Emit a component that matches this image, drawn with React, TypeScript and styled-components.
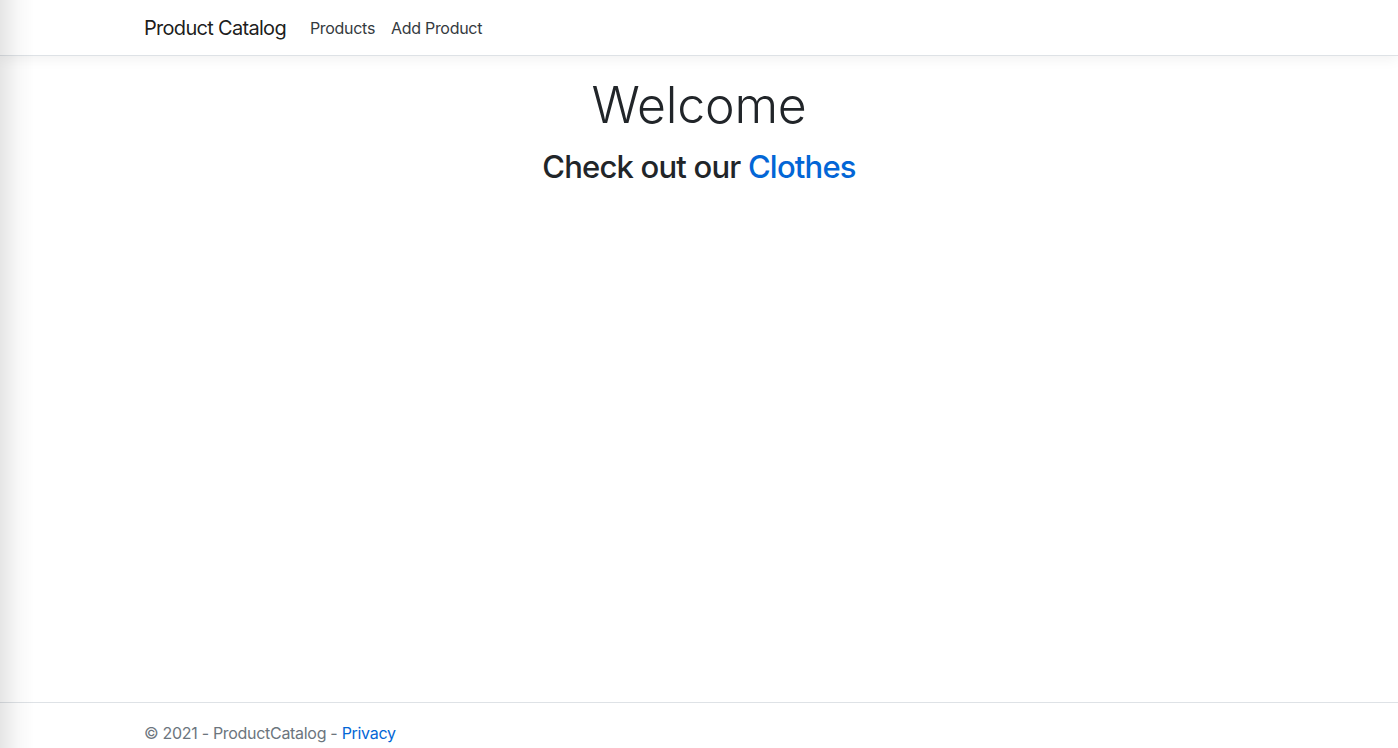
import React from "react";
import styled, { createGlobalStyle } from "styled-components";

const GlobalStyle = createGlobalStyle`
  html, body { margin: 0; padding: 0; height: 100%; overflow: hidden; }
  body {
    font-family: Inter, "Noto Sans", "Liberation Sans", sans-serif;
    font-size: 16px;
    line-height: 1.5;
    color: #212529;
    background: #fff;
  }
  * { box-sizing: border-box; }
`;

const Page = styled.div`
  height: 100vh;
  display: flex;
  flex-direction: column;
  overflow: hidden;
`;

const EdgeShade = styled.div`
  position: fixed;
  top: 0;
  left: 0;
  bottom: 0;
  width: 34px;
  pointer-events: none;
  background: linear-gradient(to right, rgba(0, 0, 0, 0.1), rgba(0, 0, 0, 0.03) 50%, rgba(0, 0, 0, 0));
`;

const Container = styled.div`
  width: 100%;
  max-width: 1140px;
  margin: 0 auto;
  padding: 0 15px;
`;

const Header = styled.header`
  flex-shrink: 0;
  margin-bottom: 19px;
`;

const NavBar = styled.nav`
  padding: 8px 16px 7px;
  border-bottom: 1px solid #dee2e6;
  box-shadow: 0 4px 12px rgba(0, 0, 0, 0.05);
  background: #fff;
`;

const NavInner = styled(Container)`
  display: flex;
  align-items: center;
`;

const Brand = styled.a`
  font-size: 20px;
  line-height: 30px;
  padding: 5px 0;
  margin-right: 16px;
  letter-spacing: -0.7px;
  color: rgba(0, 0, 0, 0.9);
  text-decoration: none;
  white-space: nowrap;
`;

const NavList = styled.ul`
  display: flex;
  list-style: none;
  margin: 0;
  padding: 0;
`;

const NavLink = styled.a`
  display: block;
  padding: 8px 8px;
  color: #343a40;
  text-decoration: none;
  font-size: 16px;
  line-height: 24px;
  letter-spacing: -0.3px;
`;

const Main = styled.main`
  flex: 1;
  text-align: center;
`;

const Title = styled.h1`
  margin: 0 0 13px;
  font-size: 50px;
  font-weight: 300;
  line-height: 1.2;
  letter-spacing: -0.2px;
`;

const Subtitle = styled.h2`
  margin: 0 0 8px;
  font-size: 31px;
  font-weight: 500;
  line-height: 1.2;
  letter-spacing: -0.8px;
`;

const Link = styled.a`
  color: #0366d6;
  text-decoration: none;
`;

const Footer = styled.footer`
  flex-shrink: 0;
  height: 46px;
  border-top: 1px solid #dee2e6;
  line-height: 60px;
  white-space: nowrap;
  color: #6c757d;
  letter-spacing: -0.3px;
  overflow: hidden;
`;

export default function App() {
  return (
    <>
      <GlobalStyle />
      <Page>
        <Header>
          <NavBar>
            <NavInner>
              <Brand href="#">Product Catalog</Brand>
              <NavList>
                <li>
                  <NavLink href="#">Products</NavLink>
                </li>
                <li>
                  <NavLink href="#">Add Product</NavLink>
                </li>
              </NavList>
            </NavInner>
          </NavBar>
        </Header>
        <Main>
          <Container>
            <Title>Welcome</Title>
            <Subtitle>
              Check out our <Link href="#">Clothes</Link>
            </Subtitle>
          </Container>
        </Main>
        <Footer>
          <Container>
            © 2021 - ProductCatalog - <Link href="#">Privacy</Link>
          </Container>
        </Footer>
      </Page>
      <EdgeShade />
    </>
  );
}
